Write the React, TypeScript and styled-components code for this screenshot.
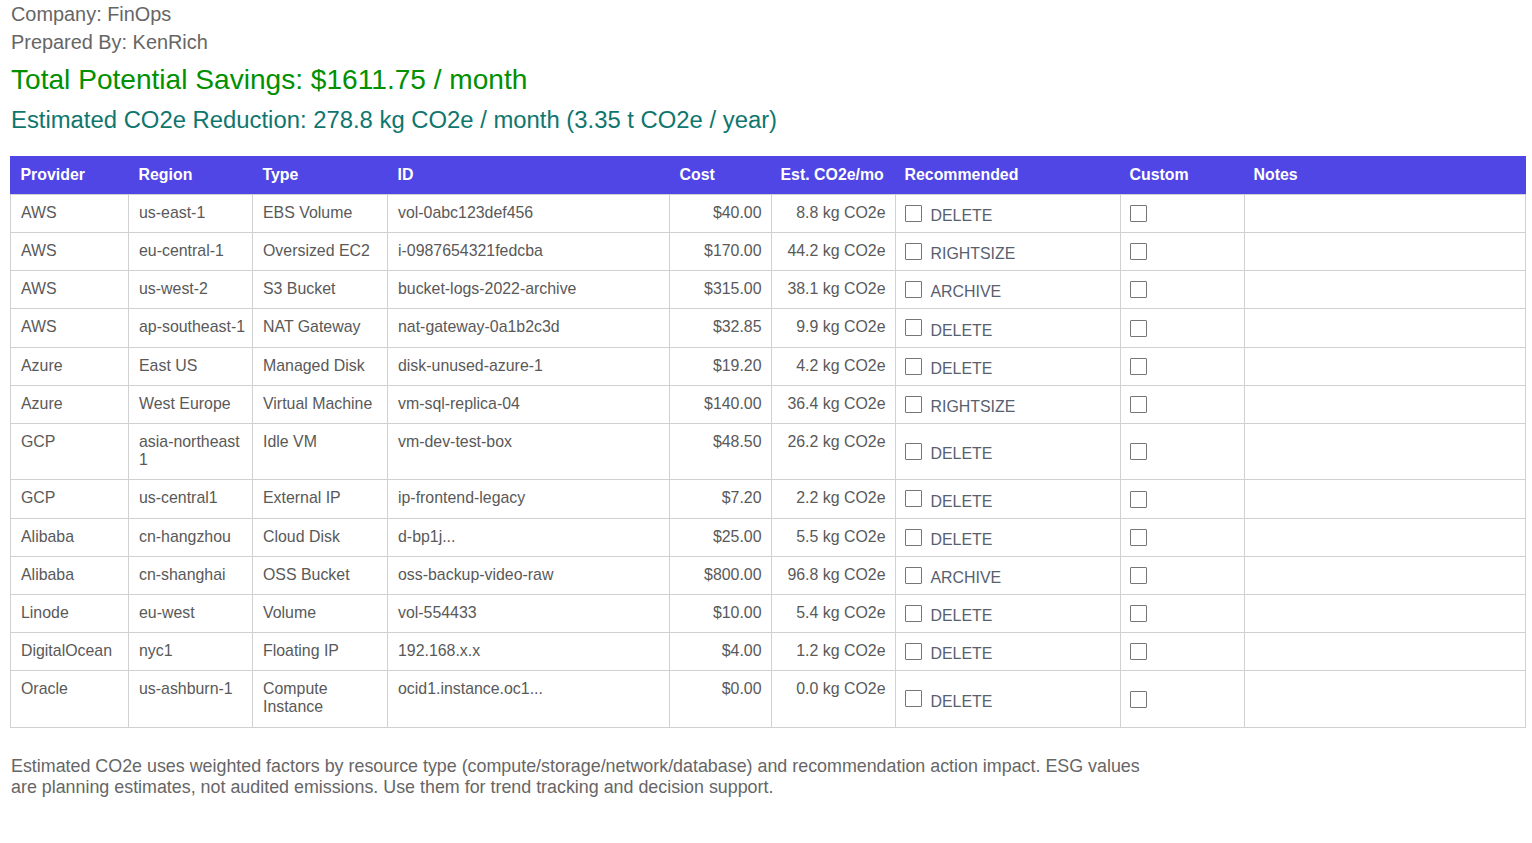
import React from "react";
import styled, { createGlobalStyle } from "styled-components";

const Global = createGlobalStyle`
  html, body { margin: 0; background: #fff; }
  body { font-family: "Liberation Sans", Arial, sans-serif; color: #666; }
`;
const Page = styled.main`
  padding: 0 6px 46px 11px;
`;
const Meta = styled.p`
  margin: 0;
  font-size: 19.9px;
  line-height: 28px;
  color: #666;
`;
const Savings = styled.h1`
  margin: 6px 0 0;
  font-size: 28.1px;
  line-height: 36px;
  font-weight: 400;
  color: #009000;
`;
const Reduction = styled.h2`
  margin: 7px 0 0;
  font-size: 23.85px;
  line-height: 30px;
  font-weight: 400;
  color: #0f766e;
`;
const Table = styled.table`
  margin: 21px 0 0 -1px;
  width: 1515px;
  table-layout: fixed;
  border-collapse: collapse;
  font-size: 15.9px;
  line-height: 18px;
`;
const Head = styled.th`
  background: #4f46e5;
  color: #fff;
  font-weight: 700;
  text-align: left;
  padding: 0 9px 2px 9.5px;
  height: 38px;
  box-sizing: border-box;
  white-space: nowrap;
  border: 1.33px solid #4f46e5;
  border-bottom-color: #d0d0d0;
  &:nth-child(n + 6) {
    padding-left: 8.5px;
  }
`;
const Row = styled.tr<{ $height: number }>`
  height: ${(p) => p.$height}px;
`;
const Cell = styled.td<{ $right?: boolean; $nowrap?: boolean }>`
  border: 1.33px solid #d0d0d0;
  padding: 8.5px ${(p) => (p.$right ? "9.5px" : "9px")} 10.5px 10px;
  vertical-align: top;
  color: #595959;
  text-align: ${(p) => (p.$right ? "right" : "left")};
  white-space: ${(p) => (p.$nowrap ? "nowrap" : "normal")};
`;
const ActionCell = styled(Cell)`
  vertical-align: middle;
  padding: 0 9px 0 8.5px;
`;
const Action = styled.label`
  display: flex;
  align-items: flex-start;
  gap: 9px;
  color: #57606f;
`;
const ActionText = styled.span`
  padding-top: 5.5px;
`;
const Box = styled.span`
  display: block;
  width: 17px;
  height: 17px;
  box-sizing: border-box;
  border: 1px solid #767676;
  border-radius: 1px;
  flex: none;
`;
const ActionBox = styled(Box)`
  margin-top: 2.75px;
`;
const Note = styled.p`
  margin: 28px 0 0;
  max-width: 1140px;
  font-size: 17.88px;
  line-height: 21px;
  color: #666;
`;

const widths = [118, 124, 135, 282, 102, 124, 225, 124, 281];
const heads = ["Provider", "Region", "Type", "ID", "Cost", "Est. CO2e/mo", "Recommended", "Custom", "Notes"];
const rows: { h: number; c: string[] }[] = [
  { h: 38, c: ["AWS", "us-east-1", "EBS Volume", "vol-0abc123def456", "$40.00", "8.8 kg CO2e", "DELETE"] },
  { h: 38, c: ["AWS", "eu-central-1", "Oversized EC2", "i-0987654321fedcba", "$170.00", "44.2 kg CO2e", "RIGHTSIZE"] },
  { h: 38, c: ["AWS", "us-west-2", "S3 Bucket", "bucket-logs-2022-archive", "$315.00", "38.1 kg CO2e", "ARCHIVE"] },
  { h: 39, c: ["AWS", "ap-southeast-1", "NAT Gateway", "nat-gateway-0a1b2c3d", "$32.85", "9.9 kg CO2e", "DELETE"] },
  { h: 38, c: ["Azure", "East US", "Managed Disk", "disk-unused-azure-1", "$19.20", "4.2 kg CO2e", "DELETE"] },
  { h: 38, c: ["Azure", "West Europe", "Virtual Machine", "vm-sql-replica-04", "$140.00", "36.4 kg CO2e", "RIGHTSIZE"] },
  { h: 56, c: ["GCP", "asia-northeast 1", "Idle VM", "vm-dev-test-box", "$48.50", "26.2 kg CO2e", "DELETE"] },
  { h: 39, c: ["GCP", "us-central1", "External IP", "ip-frontend-legacy", "$7.20", "2.2 kg CO2e", "DELETE"] },
  { h: 38, c: ["Alibaba", "cn-hangzhou", "Cloud Disk", "d-bp1j...", "$25.00", "5.5 kg CO2e", "DELETE"] },
  { h: 38, c: ["Alibaba", "cn-shanghai", "OSS Bucket", "oss-backup-video-raw", "$800.00", "96.8 kg CO2e", "ARCHIVE"] },
  { h: 38, c: ["Linode", "eu-west", "Volume", "vol-554433", "$10.00", "5.4 kg CO2e", "DELETE"] },
  { h: 38, c: ["DigitalOcean", "nyc1", "Floating IP", "192.168.x.x", "$4.00", "1.2 kg CO2e", "DELETE"] },
  { h: 57, c: ["Oracle", "us-ashburn-1", "Compute Instance", "ocid1.instance.oc1...", "$0.00", "0.0 kg CO2e", "DELETE"] },
];

export default function App() {
  return (
    <Page>
      <Global />
      <Meta>Company: FinOps</Meta>
      <Meta>Prepared By: KenRich</Meta>
      <Savings>Total Potential Savings: $1611.75 / month</Savings>
      <Reduction>Estimated CO2e Reduction: 278.8 kg CO2e / month (3.35 t CO2e / year)</Reduction>
      <Table>
        <colgroup>
          {widths.map((w, i) => (
            <col key={i} style={{ width: w }} />
          ))}
        </colgroup>
        <thead>
          <tr>
            {heads.map((h) => (
              <Head key={h}>{h}</Head>
            ))}
          </tr>
        </thead>
        <tbody>
          {rows.map(({ h, c }) => (
            <Row key={c[3]} $height={h}>
              <Cell>{c[0]}</Cell>
              <Cell $nowrap={!c[1].includes(" ")}>{c[1]}</Cell>
              <Cell>{c[2]}</Cell>
              <Cell>{c[3]}</Cell>
              <Cell $right>{c[4]}</Cell>
              <Cell $right>{c[5]}</Cell>
              <ActionCell>
                <Action>
                  <ActionBox />
                  <ActionText>{c[6]}</ActionText>
                </Action>
              </ActionCell>
              <ActionCell>
                <Box />
              </ActionCell>
              <Cell />
            </Row>
          ))}
        </tbody>
      </Table>
      <Note>
        Estimated CO2e uses weighted factors by resource type (compute/storage/network/database) and recommendation action impact. ESG values are planning estimates, not audited emissions. Use them for trend tracking and decision support.
      </Note>
    </Page>
  );
}
